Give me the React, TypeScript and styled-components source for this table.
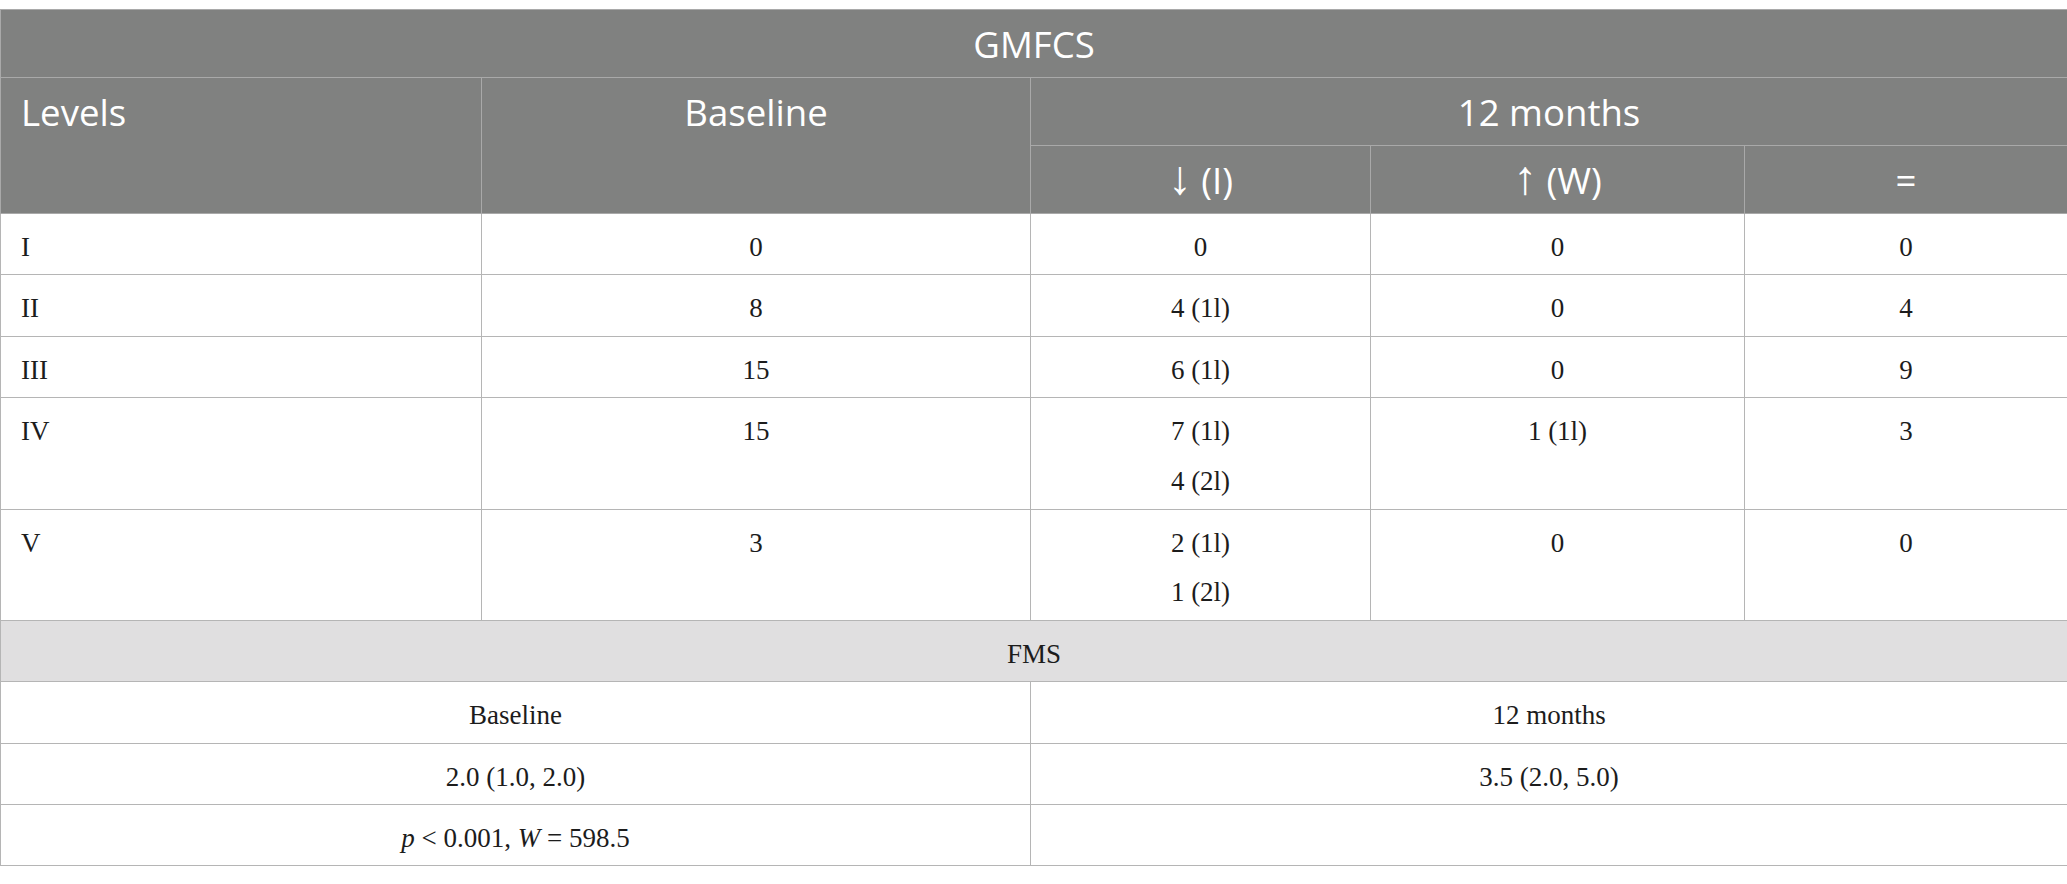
import React from "react";
import styled, { createGlobalStyle } from "styled-components";

const GlobalStyle = createGlobalStyle`
  html, body {
    margin: 0;
    padding: 0;
    background: #ffffff;
  }
`;

const Page = styled.div`
  padding-top: 9px;
`;

const Table = styled.table`
  width: 2067px;
  border-collapse: collapse;
  table-layout: fixed;
`;

const HeadCell = styled.th<{ $align?: "left" | "center"; $valign?: "top" | "middle" }>`
  background: #808180;
  color: #ffffff;
  font-family: "Open Sans", "Noto Sans", "DejaVu Sans", sans-serif;
  font-size: 36.6px;
  font-weight: 400;
  line-height: 47px;
  padding: 11px 20px 9px;
  border: 1px solid #a9a9a9;
  text-align: ${(p) => p.$align ?? "center"};
  vertical-align: ${(p) => p.$valign ?? "top"};
`;

const Arrow = styled.span`
  font-family: "Liberation Sans", Arial, sans-serif;
  font-weight: 400;
  font-size: 1.3em;
  line-height: 0;
`;

const Cell = styled.td<{ $align?: "left" | "center" }>`
  color: #1c1c1c;
  font-family: "Liberation Serif", "Times New Roman", serif;
  font-size: 27px;
  line-height: 49.9px;
  padding: 9px 20px 1.5px;
  border: 1px solid #b5b5b5;
  text-align: ${(p) => p.$align ?? "center"};
  vertical-align: top;
`;

const SectionCell = styled(Cell)`
  background: #e0dfe0;
`;

const Line = styled.div`
  display: block;
`;

const Italic = styled.i`
  font-style: italic;
`;

type Row = { level: string; baseline: string; down: string[]; up: string[]; eq: string };

const rows: Row[] = [
  { level: "I", baseline: "0", down: ["0"], up: ["0"], eq: "0" },
  { level: "II", baseline: "8", down: ["4 (1l)"], up: ["0"], eq: "4" },
  { level: "III", baseline: "15", down: ["6 (1l)"], up: ["0"], eq: "9" },
  { level: "IV", baseline: "15", down: ["7 (1l)", "4 (2l)"], up: ["1 (1l)"], eq: "3" },
  { level: "V", baseline: "3", down: ["2 (1l)", "1 (2l)"], up: ["0"], eq: "0" },
];

export default function App() {
  return (
    <Page>
      <GlobalStyle />
      <Table>
        <colgroup>
          <col style={{ width: 481 }} />
          <col style={{ width: 549 }} />
          <col style={{ width: 340 }} />
          <col style={{ width: 374 }} />
          <col style={{ width: 323 }} />
        </colgroup>
        <thead>
          <tr>
            <HeadCell colSpan={5} $valign="middle">
              GMFCS
            </HeadCell>
          </tr>
          <tr>
            <HeadCell rowSpan={2} $align="left">
              Levels
            </HeadCell>
            <HeadCell rowSpan={2}>Baseline</HeadCell>
            <HeadCell colSpan={3}>12 months</HeadCell>
          </tr>
          <tr>
            <HeadCell>
              <Arrow>↓</Arrow> (I)
            </HeadCell>
            <HeadCell>
              <Arrow>↑</Arrow> (W)
            </HeadCell>
            <HeadCell>=</HeadCell>
          </tr>
        </thead>
        <tbody>
          {rows.map((r) => (
            <tr key={r.level}>
              <Cell $align="left">{r.level}</Cell>
              <Cell>{r.baseline}</Cell>
              <Cell>
                {r.down.map((d) => (
                  <Line key={d}>{d}</Line>
                ))}
              </Cell>
              <Cell>
                {r.up.map((u) => (
                  <Line key={u}>{u}</Line>
                ))}
              </Cell>
              <Cell>{r.eq}</Cell>
            </tr>
          ))}
          <tr>
            <SectionCell colSpan={5}>FMS</SectionCell>
          </tr>
          <tr>
            <Cell colSpan={2}>Baseline</Cell>
            <Cell colSpan={3}>12 months</Cell>
          </tr>
          <tr>
            <Cell colSpan={2}>2.0 (1.0, 2.0)</Cell>
            <Cell colSpan={3}>3.5 (2.0, 5.0)</Cell>
          </tr>
          <tr>
            <Cell colSpan={2}>
              <Italic>p</Italic> &lt; 0.001, <Italic>W</Italic> = 598.5
            </Cell>
            <Cell colSpan={3}></Cell>
          </tr>
        </tbody>
      </Table>
    </Page>
  );
}
